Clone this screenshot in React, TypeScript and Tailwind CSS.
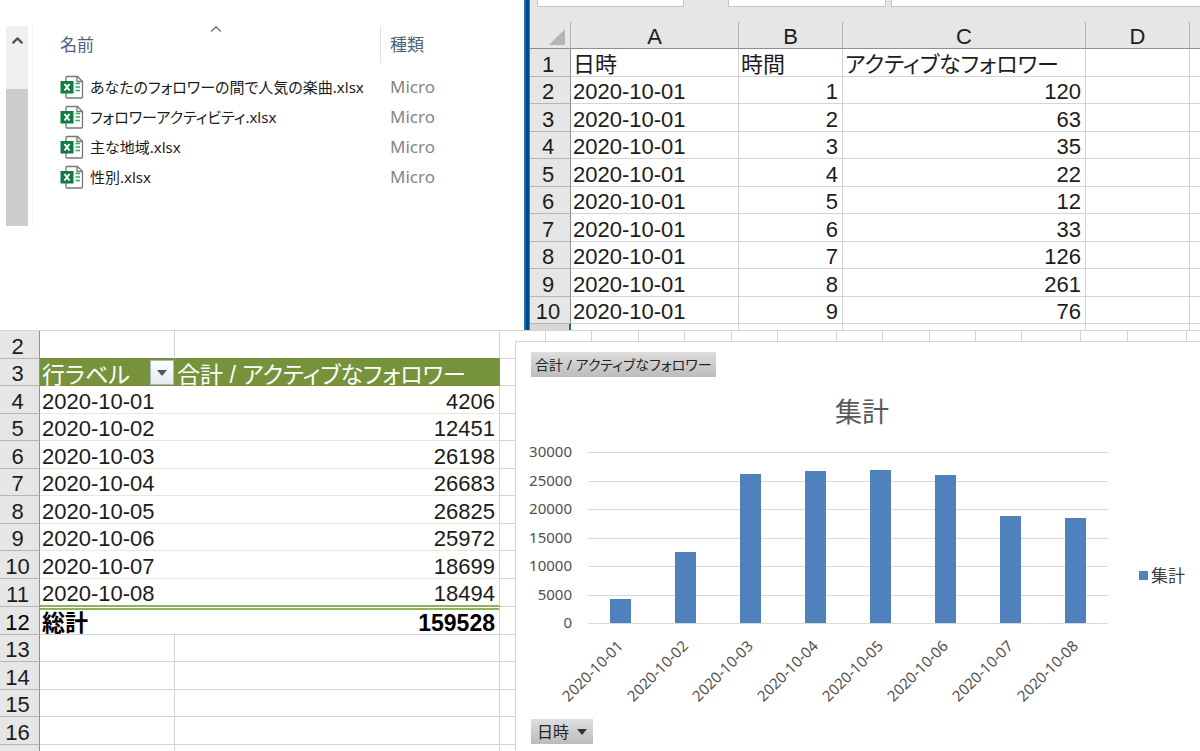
import { clsx } from 'clsx';
import { ChevronUp } from 'lucide-react';

const files = [
  'あなたのフォロワーの間で人気の楽曲.xlsx',
  'フォロワーアクティビティ.xlsx',
  '主な地域.xlsx',
  '性別.xlsx',
];

const activeFollowers = [120, 63, 35, 22, 12, 33, 126, 261, 76];

const dailyTotals = [
  { date: '2020-10-01', total: 4206 },
  { date: '2020-10-02', total: 12451 },
  { date: '2020-10-03', total: 26198 },
  { date: '2020-10-04', total: 26683 },
  { date: '2020-10-05', total: 26825 },
  { date: '2020-10-06', total: 25972 },
  { date: '2020-10-07', total: 18699 },
  { date: '2020-10-08', total: 18494 },
];

const cell = 'border-r border-b border-[#d4d4d4] px-0.5 pt-1 pb-0 leading-[22px] whitespace-nowrap';
const openCell = 'border-b border-[#d4d4d4] p-0';
const rowHead =
  'border-r border-b border-r-[#8f8f8f] border-b-[#b5b5b5] bg-[#e6e6e6] p-0 pt-1 pr-1 text-center font-normal leading-[22px]';
const colHead = 'border-r border-b border-r-[#b5b5b5] border-b-[#8f8f8f] p-0 pt-1 text-center font-normal leading-[22px]';
const sheetRow = 'odd:h-[28px] even:h-[27px]';

function ExcelIcon() {
  return (
    <svg viewBox="0 0 24 24" className="h-6 w-6 shrink-0" aria-hidden="true">
      <path d="M7 1.5h10.500l5 5v15.500a1 1 0 0 1-1 1H7a1 1 0 0 1-1-1V2.500a1 1 0 0 1 1-1z" fill="#fff" stroke="#777" strokeWidth="1.300" />
      <path d="M17 1.500v5h5.500" fill="none" stroke="#777" strokeWidth="1.300" />
      <path d="M15.500 8.500h4.500M15.500 12h4.500M15.500 15.500h4.500" stroke="#2fae6b" strokeWidth="1.600" />
      <path d="M0.500 6h13v12.500h-13z" fill="#107c41" />
      <path d="M4.500 9l5 6.500M9.500 9l-5 6.500" stroke="#fff" strokeWidth="2" />
    </svg>
  );
}

function FileExplorer() {
  return (
    <section className="flex items-start bg-white pl-1.5 pt-[26px] text-[17px] [font-family:'Noto_Sans','Noto_Sans_CJK_JP',sans-serif]">
      <div className="flex h-[200px] w-[22px] shrink-0 flex-col bg-[#f0f0f0]">
        <button type="button" aria-label="上へスクロール" className="flex h-[63px] items-start justify-center pt-1.5 text-[#505050]">
          <ChevronUp size={17} strokeWidth={3} />
        </button>
        <div className="flex-1 bg-[#cdcdcd]" />
      </div>
      <div className="ml-1 h-[200px] border-l border-[#f3f3f3] pl-[27px]">
        <table className="w-[380px] table-fixed border-separate border-spacing-0 text-left">
          <colgroup>
            <col />
            <col className="w-[59px]" />
          </colgroup>
          <thead>
            <tr className="text-[#4c607a]">
              <th className="p-0 pb-[9px] font-normal">
                <button type="button" className="relative flex h-[37px] w-full items-center border-r border-[#e0e0e0] text-left">
                  名前
                  <ChevronUp size={18} strokeWidth={1.5} className="absolute -top-1.5 left-[147px] text-[#666]" />
                </button>
              </th>
              <th className="p-0 pb-[9px] pl-[9px] font-normal whitespace-nowrap">種類</th>
            </tr>
          </thead>
          <tbody>
            {files.map((name) => (
              <tr key={name} className="h-[30px]">
                <td className="p-0">
                  <div className="flex h-[30px] items-center gap-1.5 text-[15px] whitespace-nowrap text-[#1a1a1a] [font-feature-settings:'palt']">
                    <ExcelIcon />
                    {name}
                  </div>
                </td>
                <td className="p-0 pl-[9px] text-[#868686]">Micro</td>
              </tr>
            ))}
          </tbody>
        </table>
      </div>
    </section>
  );
}

function SourceSheet() {
  return (
    <section className="flex min-w-0 overflow-hidden text-[22px] text-[#1c1c1c] [font-family:'Liberation_Sans','Noto_Sans_CJK_JP',sans-serif]">
      <div className="w-[6px] shrink-0 border-l-2 border-r border-l-[#1a6fae] border-r-[#3f8a5f] bg-[#004b87]" />
      <div className="min-w-0 flex-1 bg-[#e6e6e6]">
        <div className="flex h-[22px] items-start pl-[7px]">
          <div className="h-[7px] w-[147px] border border-t-0 border-[#c6c6c6] bg-white" />
          <div className="ml-[44px] h-[7px] w-[158px] border border-t-0 border-[#c6c6c6] bg-white" />
          <div className="ml-[5px] h-[7px] flex-1 border-b border-l border-[#c6c6c6] bg-white" />
        </div>
        <table className="w-full table-fixed border-separate border-spacing-0">
          <colgroup>
            <col className="w-[41px]" />
            <col className="w-[168px]" />
            <col className="w-[104px]" />
            <col className="w-[243px]" />
            <col className="w-[104px]" />
            <col />
          </colgroup>
          <thead>
            <tr className="h-[27px]">
              <th className={colHead}>
                <svg viewBox="0 0 16 16" className="ml-[19px] block h-4 w-4" aria-hidden="true">
                  <path d="M16 0v16H0z" fill="#b4b4b4" />
                </svg>
              </th>
              {['A', 'B', 'C', 'D'].map((name) => (
                <th key={name} className={colHead}>
                  {name}
                </th>
              ))}
              <th className="border-b border-[#8f8f8f] p-0" />
            </tr>
          </thead>
          <tbody className="bg-white">
            <tr className={sheetRow}>
              <th className={rowHead}>1</th>
              <td className={cell}>日時</td>
              <td className={cell}>時間</td>
              <td className={clsx(cell, "[font-feature-settings:'palt']")}>アクティブなフォロワー</td>
              <td className={cell} />
              <td className={openCell} />
            </tr>
            {activeFollowers.map((count, i) => (
              <tr key={i} className={sheetRow}>
                <th className={rowHead}>{i + 2}</th>
                <td className={cell}>2020-10-01</td>
                <td className={clsx(cell, 'pr-1 text-right')}>{i + 1}</td>
                <td className={clsx(cell, 'pr-1 text-right')}>{count}</td>
                <td className={cell} />
                <td className={openCell} />
              </tr>
            ))}
            <tr className="h-[6px]">
              <th className="border-r-2 border-[#107c41] bg-[#d8d8d8] p-0" />
              <td className="border-r border-[#d4d4d4] p-0" />
              <td className="border-r border-[#d4d4d4] p-0" />
              <td className="border-r border-[#d4d4d4] p-0" />
              <td className="border-r border-[#d4d4d4] p-0" />
              <td className="p-0" />
            </tr>
          </tbody>
        </table>
      </div>
    </section>
  );
}

function PivotTable() {
  const pivotCell = 'border-b border-[#e4ebd8] px-0.5 pt-1 pb-0 leading-[22px]';
  const header = 'bg-[#76933c] p-0 pl-0.5 text-left text-[23px] font-normal leading-[22px] text-white whitespace-nowrap';
  const totalCell = 'border-b border-[#d4d4d4] p-0 pt-1 text-[23px] leading-[22px] shadow-[inset_0_1px_0_#fff,inset_0_3px_0_#8fb35a]';
  return (
    <section className="min-w-0 border-t border-[#d4d4d4] bg-white text-[22px] text-[#1c1c1c] [font-family:'Liberation_Sans','Noto_Sans_CJK_JP',sans-serif]">
      <table className="w-full table-fixed border-separate border-spacing-0">
        <colgroup>
          <col className="w-[40px]" />
          <col className="w-[135px]" />
          <col className="w-[325px]" />
          <col />
        </colgroup>
        <tbody>
          <tr className={sheetRow}>
            <th className={rowHead}>2</th>
            <td className={clsx(cell, 'border-b-[#76933c]')} />
            <td className={clsx(cell, 'border-b-[#76933c]')} />
            <td className={openCell} />
          </tr>
          <tr className={sheetRow}>
            <th className={rowHead}>3</th>
            <th className={header}>
              <div className="flex items-center justify-between [font-feature-settings:'palt']">
                <span className="pt-1">行ラベル</span>
                <button
                  type="button"
                  aria-label="行ラベルのフィルター"
                  className="mr-px flex h-[25px] w-6 items-center justify-center border border-[#a9b6c8] bg-gradient-to-b from-white to-[#e6eaf1]"
                >
                  <svg viewBox="0 0 10 6" className="h-[6px] w-[10px]" aria-hidden="true">
                    <path d="M0 0h10L5 6z" fill="#555" />
                  </svg>
                </button>
              </div>
            </th>
            <th className={clsx(header, "pt-1 [font-feature-settings:'palt']")}>合計 / アクティブなフォロワー</th>
            <td className={openCell} />
          </tr>
          {dailyTotals.map(({ date, total }, i) => {
            const last = i === dailyTotals.length - 1;
            return (
              <tr key={date} className={sheetRow}>
                <th className={rowHead}>{i + 4}</th>
                <td className={clsx(pivotCell, last && 'border-b-2 border-b-[#8fb35a]')}>{date}</td>
                <td className={clsx(pivotCell, 'border-r border-r-[#d4d4d4] pr-1 text-right', last && 'border-b-2 border-b-[#8fb35a]')}>
                  {total}
                </td>
                <td className={openCell} />
              </tr>
            );
          })}
          <tr className={clsx(sheetRow, 'font-bold text-black')}>
            <th className={rowHead}>12</th>
            <td className={clsx(totalCell, 'pl-0.5')}>総計</td>
            <td className={clsx(totalCell, 'border-r pr-1 text-right')}>159528</td>
            <td className={openCell} />
          </tr>
          {[13, 14, 15, 16, 17].map((n) => (
            <tr key={n} className={sheetRow}>
              <th className={rowHead}>{n}</th>
              <td className={cell} />
              <td className={cell} />
              <td className={openCell} />
            </tr>
          ))}
        </tbody>
      </table>
    </section>
  );
}

function BarChart() {
  const baseline = 187;
  const plotHeight = 171;
  const max = 30000;
  const ticks = [0, 5000, 10000, 15000, 20000, 25000, 30000];
  const toY = (value: number) => Math.round(baseline - (value / max) * plotHeight);

  return (
    <svg viewBox="0 0 612 275" className="w-[612px] min-w-0" role="img" aria-label="集計">
      {ticks.map((tick) => (
        <g key={tick}>
          <path d={`M72 ${toY(tick)}.5H592`} stroke="#d9d9d9" />
          <text x="56" y={toY(tick) + 5} textAnchor="end" fontSize="15" fill="#505050">
            {tick}
          </text>
        </g>
      ))}
      {dailyTotals.map(({ date, total }, i) => {
        const x = 104 + i * 65;
        return (
          <g key={date}>
            <rect x={x - 10} y={toY(total)} width="21" height={baseline - toY(total)} fill="#4f81bd" />
            <text x={x + 4} y="211" textAnchor="end" fontSize="15" fill="#505050" transform={`rotate(-45 ${x + 4} 211)`}>
              {date}
            </text>
          </g>
        );
      })}
    </svg>
  );
}

const fieldButton =
  'flex h-[25px] items-center bg-gradient-to-b from-[#dedede] to-[#bcbcbc] leading-6 whitespace-nowrap text-[#222]';

function PivotChart() {
  // widths of the empty sheet columns showing above the chart
  const columns = [
    'w-[31px]', 'w-[46px]', 'w-[47px]', 'w-[46px]', 'w-[47px]', 'w-[46px]', 'w-[59px]',
    'w-[46px]', 'w-[47px]', 'w-[46px]', 'w-[46px]', 'w-[59px]', 'w-[47px]', 'w-[59px]',
  ];
  return (
    <section className="flex min-w-0 flex-col overflow-hidden bg-white [font-family:'Noto_Sans','Noto_Sans_CJK_JP',sans-serif]">
      <div className="flex h-[11px] border-t border-[#d4d4d4]">
        {columns.map((width, i) => (
          <div key={i} className={clsx('shrink-0 border-r border-[#d4d4d4]', width)} />
        ))}
      </div>
      <div className="flex-1 border-t border-l border-[#d4d4d4] pt-[10px]">
        <button type="button" className={clsx(fieldButton, "ml-[15px] px-1 text-sm [font-feature-settings:'palt']")}>
          合計 / アクティブなフォロワー
        </button>
        <h2 className="mt-[19px] pl-2 text-center text-[27px] leading-8 text-[#595959]">集計</h2>
        <div className="mt-2 flex items-center">
          <BarChart />
          <div className="ml-[11px] flex shrink-0 items-center gap-[3px] pt-1 pr-3 text-[17px] text-[#404040]">
            <span className="h-[9px] w-[9px] bg-[#4f81bd]" />
            集計
          </div>
        </div>
        <button type="button" className={clsx(fieldButton, 'mt-2 ml-[15px] gap-2 px-1.5 text-base')}>
          日時
          <svg viewBox="0 0 10 6" className="h-[6px] w-[10px]" aria-hidden="true">
            <path d="M0 0h10L5 6z" fill="#333" />
          </svg>
        </button>
      </div>
    </section>
  );
}

export default function App() {
  return (
    <main className="flex h-screen flex-col overflow-hidden bg-white">
      <div className="grid shrink-0 grid-cols-[524fr_676fr]">
        <FileExplorer />
        <SourceSheet />
      </div>
      <div className="grid min-h-0 flex-1 grid-cols-[515fr_685fr]">
        <PivotTable />
        <PivotChart />
      </div>
    </main>
  );
}
